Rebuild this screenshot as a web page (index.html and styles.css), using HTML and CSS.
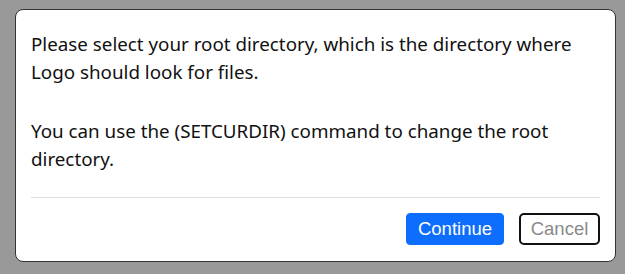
FILE: index.html
```html
<!DOCTYPE html>
<html>
<head>
<meta charset="utf-8">
<link rel="stylesheet" href="styles.css">
</head>
<body>
<div class="dialog">
  <div class="body">
    <p>Please select your root directory, which is the directory where Logo should look for files.</p>
    <p>You can use the (SETCURDIR) command to change the root directory.</p>
  </div>
  <div class="footer">
    <button class="btn primary">Continue</button>
    <button class="btn secondary">Cancel</button>
  </div>
</div>
</body>
</html>
```
FILE: styles.css
```css
html, body {
  margin: 0;
  height: 100%;
  background: #999999;
}
body {
  padding: 9px 10px 0 15px;
  box-sizing: border-box;
}
.dialog {
  width: 601px;
  height: 253px;
  box-sizing: border-box;
  background: #ffffff;
  border: 1px solid #333333;
  border-radius: 8px;
  padding: 20px 15px 15px 15px;
  display: flex;
  flex-direction: column;
}
.body {
  font-family: "Noto Sans", sans-serif;
  font-size: 18.8px;
  line-height: 28px;
  color: #111;
  padding-bottom: 24px;
  border-bottom: 1px solid #dddddd;
}
.body p {
  margin: 0 0 31px 0;
}
.body p:last-child {
  margin-bottom: 0;
}
.footer {
  display: flex;
  justify-content: flex-end;
  gap: 15px;
  margin-top: 15px;
}
.btn {
  font-family: "Liberation Sans", Arial, sans-serif;
  font-size: 18.5px;
  height: 32px;
  box-sizing: border-box;
  padding: 0;
  cursor: pointer;
}
.primary {
  background: #0d6efd;
  color: #fff;
  border: 1px solid #0d6efd;
  border-radius: 4px;
  width: 98px;
}
.secondary {
  background: #fff;
  color: #8a8a8a;
  border: 2px solid #111;
  border-radius: 5px;
  width: 81px;
}
```
